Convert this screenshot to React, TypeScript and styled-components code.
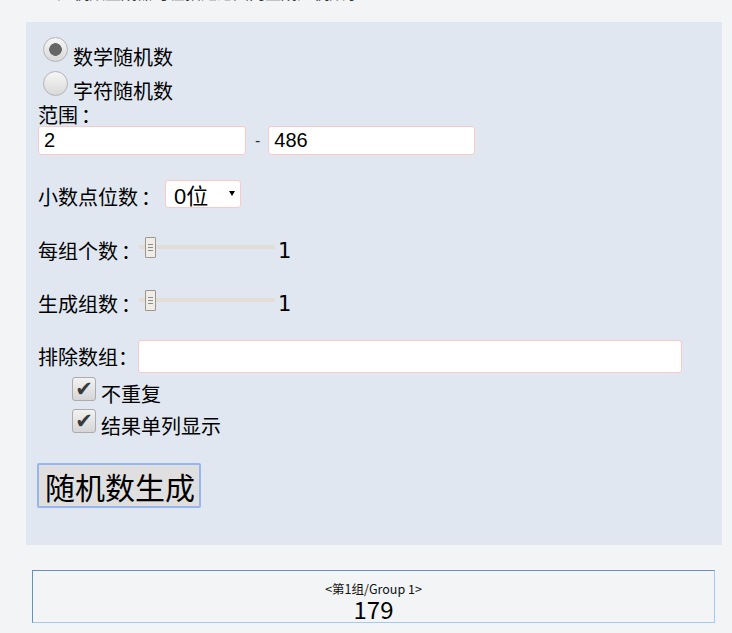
import React from 'react';
import styled, { createGlobalStyle } from 'styled-components';

const GlobalStyle = createGlobalStyle`
    html, body {
        margin: 0;
        padding: 0;
        background: #f3f4f6;
    }
    body {
        font-family: "Noto Sans CJK SC", "Liberation Sans", sans-serif;
        color: #000;
    }
`;

const cjk = `"Noto Sans CJK SC", "Liberation Sans", sans-serif`;
const latin = `"Liberation Sans", "Noto Sans CJK SC", sans-serif`;

const Page = styled.div`
    padding: 0 10px 0 26px;
    width: 732px;
    box-sizing: border-box;
    height: 633px;
    overflow: hidden;
`;

const Intro = styled.div`
    height: 22px;
    overflow: hidden;
    padding-left: 31px;
`;

const IntroText = styled.p`
    margin: -18px 0 0;
    font-size: 16px;
    line-height: 20px;
    color: #333;
    white-space: nowrap;
`;

const Panel = styled.div`
    background: #e0e7f0;
    padding: 15px 12px 37px 12px;
`;

const RadioRow = styled.label`
    display: flex;
    align-items: flex-start;
    height: 34px;
`;

const Radio = styled.input.attrs({ type: 'radio' })`
    appearance: none;
    width: 25px;
    height: 25px;
    margin: 0 5px;
    border: 1px solid #b4b4b4;
    border-radius: 50%;
    box-sizing: border-box;
    background: linear-gradient(#f6f6f6, #d9d9d9);
    &:checked {
        background: radial-gradient(circle, #666 0 6px, transparent 6.6px),
            linear-gradient(#f6f6f6, #d9d9d9);
    }
`;

const Label = styled.span<{ $top?: number }>`
    font-family: ${cjk};
    font-size: 20px;
    line-height: 20px;
    margin-top: ${p => p.$top ?? 0}px;
    white-space: nowrap;
`;

const Colon = styled.span`
    margin-left: 3px;
`;

const InputsRow = styled.div`
    display: flex;
    align-items: center;
    margin-top: 1px;
`;

const TextInput = styled.input<{ $w: number; $h: number }>`
    width: ${p => p.$w}px;
    height: ${p => p.$h}px;
    box-sizing: border-box;
    border: 1px solid #fcc8c8;
    border-radius: 3px;
    background: #fff;
    padding: 0 5px;
    font-family: ${latin};
    font-size: 20px;
    color: #000;
    outline: none;
`;

const Dash = styled.span`
    font-family: ${latin};
    font-size: 16px;
    color: #333;
    margin: 0 8px 0 9px;
`;

const FieldRow = styled.div<{ $top: number; $h: number }>`
    display: flex;
    align-items: flex-start;
    margin-top: ${p => p.$top}px;
    height: ${p => p.$h}px;
`;

const SelectWrap = styled.div`
    position: relative;
    margin-left: 4px;
`;

const Select = styled.select`
    appearance: none;
    width: 76px;
    height: 28px;
    box-sizing: border-box;
    border: 1px solid #fcc8c8;
    border-radius: 3px;
    background: #fff;
    padding: 3px 0 0 8px;
    font-family: ${latin};
    font-size: 22px;
    color: #000;
    outline: none;
`;

const Arrow = styled.svg`
    position: absolute;
    left: 64px;
    top: 11px;
    pointer-events: none;
`;

const Slider = styled.div`
    display: flex;
    align-items: center;
    width: 136px;
    height: 21px;
    margin-left: -2px;
    padding-left: 6px;
    box-sizing: border-box;
    background: linear-gradient(transparent 8px, #e3ddd5 8px, #e3ddd5 12px, transparent 12px);
`;

const Thumb = styled.div`
    display: flex;
    flex-direction: column;
    align-items: center;
    justify-content: center;
    gap: 2px;
    width: 11px;
    height: 21px;
    box-sizing: border-box;
    border: 1px solid #9d968d;
    border-radius: 1px;
    background: #f0ece7;
`;

const Grip = styled.span`
    display: block;
    width: 5px;
    height: 1px;
    background: #8c8c8c;
`;

const SliderValue = styled.span`
    font-family: "DejaVu Sans", sans-serif;
    font-size: 21px;
    line-height: 22px;
    margin: 3px 0 0 3px;
`;

const CheckRow = styled.label<{ $top?: number }>`
    display: flex;
    align-items: flex-start;
    height: 32px;
    padding-left: 34px;
    margin-top: ${p => p.$top ?? 0}px;
`;

const CheckBox = styled.span`
    display: flex;
    align-items: center;
    justify-content: center;
    width: 24px;
    height: 24px;
    box-sizing: border-box;
    border: 1px solid #acacac;
    border-radius: 3px;
    background: linear-gradient(#f2f2f2, #d6d6d6);
    font-family: "DejaVu Sans", sans-serif;
    font-size: 21px;
    line-height: 22px;
    color: #3a3a3a;
    margin-right: 5px;
`;

const Button = styled.button`
    display: block;
    margin: 22px 0 0 -1px;
    width: 164px;
    height: 45px;
    box-sizing: border-box;
    border: 2px solid #95b6ef;
    border-radius: 2px;
    background: #dfdfdf;
    padding: 0 6px;
    font-family: ${cjk};
    font-size: 30px;
    line-height: 30px;
    color: #000;
    white-space: nowrap;
`;

const Result = styled.div`
    margin: 25px 7px 0 6px;
    height: 53px;
    box-sizing: border-box;
    border-style: solid;
    border-width: 1px;
    border-color: #6b8fbd #9ecaf7 #9ecaf7 #6b8fbd;
    text-align: center;
`;

const Caption = styled.div`
    font-family: ${cjk};
    font-size: 12.5px;
    line-height: 14px;
    margin-top: 11px;
    color: #111;
`;

const Number = styled.div`
    font-family: ${cjk};
    font-size: 24px;
    line-height: 24px;
    margin-top: 1px;
`;

const RangeSlider: React.FC<{ value: number }> = ({ value }) => (
    <>
        <Slider>
            <Thumb>
                <Grip />
                <Grip />
                <Grip />
            </Thumb>
        </Slider>
        <SliderValue>{value}</SliderValue>
    </>
);

const App: React.FC = () => {
    return (
        <Page>
            <GlobalStyle />
            <Intro>
                <IntroText>随机数生成器可在指定范围内生成随机数字</IntroText>
            </Intro>
            <Panel>
                <RadioRow>
                    <Radio name="mode" defaultChecked />
                    <Label $top={10}>数学随机数</Label>
                </RadioRow>
                <RadioRow>
                    <Radio name="mode" />
                    <Label $top={10}>字符随机数</Label>
                </RadioRow>
                <Label as="div">范围<Colon>：</Colon></Label>
                <InputsRow>
                    <TextInput $w={208} $h={29} defaultValue="2" />
                    <Dash>-</Dash>
                    <TextInput $w={207} $h={29} defaultValue="486" />
                </InputsRow>
                <FieldRow $top={25} $h={28}>
                    <Label $top={7}>小数点位数<Colon>：</Colon></Label>
                    <SelectWrap>
                        <Select defaultValue="0">
                            <option value="0">0位</option>
                            <option value="1">1位</option>
                            <option value="2">2位</option>
                        </Select>
                        <Arrow width="6" height="5" viewBox="0 0 6 5">
                            <polygon points="0,0 6,0 3,5" fill="#000" />
                        </Arrow>
                    </SelectWrap>
                </FieldRow>
                <FieldRow $top={29} $h={21}>
                    <Label $top={4}>每组个数<Colon>：</Colon></Label>
                    <RangeSlider value={1} />
                </FieldRow>
                <FieldRow $top={32} $h={21}>
                    <Label $top={4}>生成组数<Colon>：</Colon></Label>
                    <RangeSlider value={1} />
                </FieldRow>
                <FieldRow $top={29} $h={32}>
                    <Label $top={7}>排除数组：</Label>
                    <TextInput $w={544} $h={33} />
                </FieldRow>
                <CheckRow $top={5}>
                    <CheckBox>✔</CheckBox>
                    <Label $top={7}>不重复</Label>
                </CheckRow>
                <CheckRow>
                    <CheckBox>✔</CheckBox>
                    <Label $top={7}>结果单列显示</Label>
                </CheckRow>
                <Button>随机数生成</Button>
            </Panel>
            <Result>
                <Caption>&lt;第1组/Group 1&gt;</Caption>
                <Number>179</Number>
            </Result>
        </Page>
    );
};

export default App;
